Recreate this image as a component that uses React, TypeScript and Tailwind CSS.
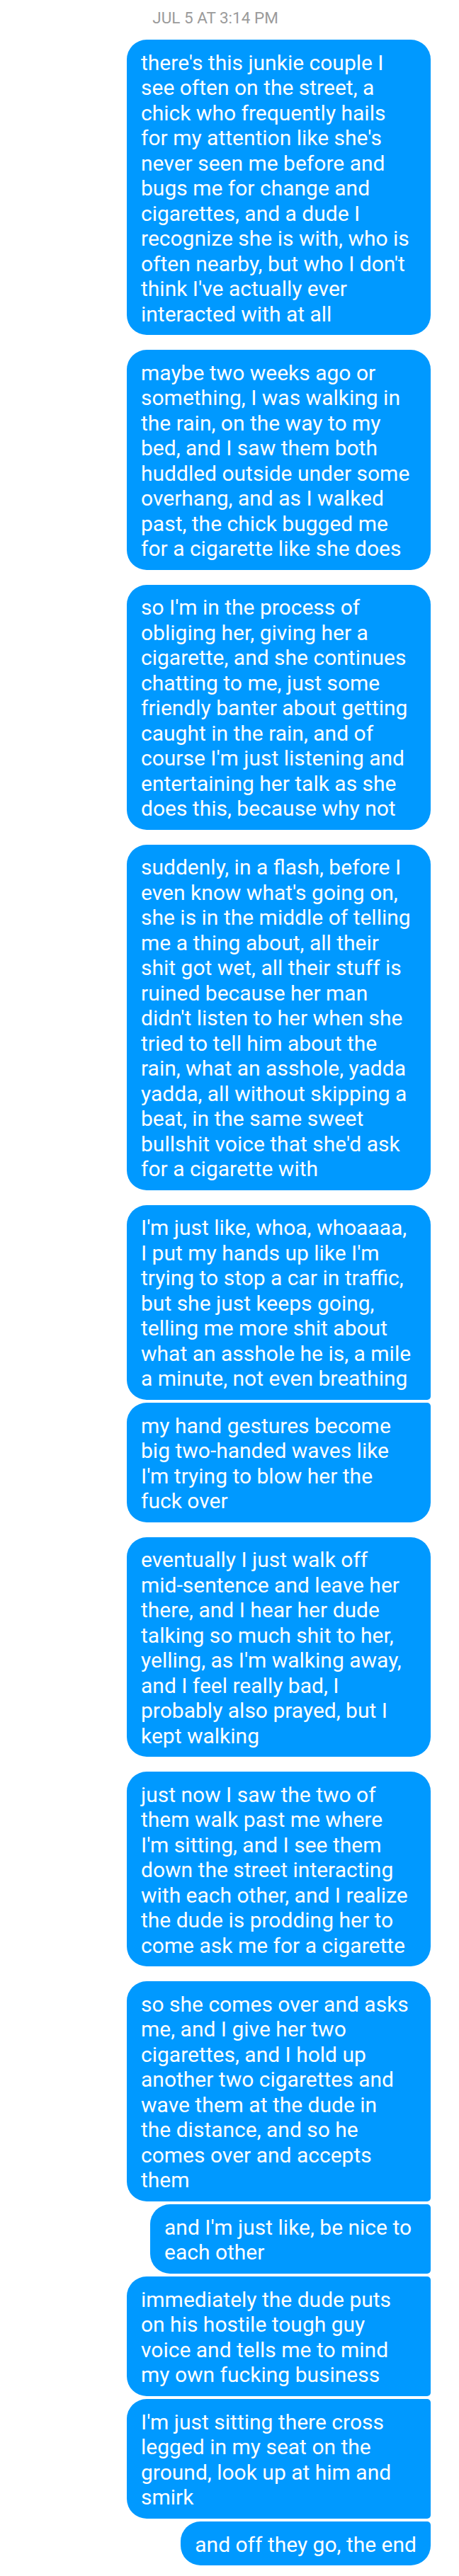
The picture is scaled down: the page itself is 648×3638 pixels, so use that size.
const messages: { lines: string[]; pos: "single" | "first" | "middle" | "last"; width?: string }[] = [
  {
    pos: "single",
    lines: [
      "there's this junkie couple I",
      "see often on the street, a",
      "chick who frequently hails",
      "for my attention like she's",
      "never seen me before and",
      "bugs me for change and",
      "cigarettes, and a dude I",
      "recognize she is with, who is",
      "often nearby, but who I don't",
      "think I've actually ever",
      "interacted with at all",
    ],
  },
  {
    pos: "single",
    lines: [
      "maybe two weeks ago or",
      "something, I was walking in",
      "the rain, on the way to my",
      "bed, and I saw them both",
      "huddled outside under some",
      "overhang, and as I walked",
      "past, the chick bugged me",
      "for a cigarette like she does",
    ],
  },
  {
    pos: "single",
    lines: [
      "so I'm in the process of",
      "obliging her, giving her a",
      "cigarette, and she continues",
      "chatting to me, just some",
      "friendly banter about getting",
      "caught in the rain, and of",
      "course I'm just listening and",
      "entertaining her talk as she",
      "does this, because why not",
    ],
  },
  {
    pos: "single",
    lines: [
      "suddenly, in a flash, before I",
      "even know what's going on,",
      "she is in the middle of telling",
      "me a thing about, all their",
      "shit got wet, all their stuff is",
      "ruined because her man",
      "didn't listen to her when she",
      "tried to tell him about the",
      "rain, what an asshole, yadda",
      "yadda, all without skipping a",
      "beat, in the same sweet",
      "bullshit voice that she'd ask",
      "for a cigarette with",
    ],
  },
  {
    pos: "first",
    lines: [
      "I'm just like, whoa, whoaaaa,",
      "I put my hands up like I'm",
      "trying to stop a car in traffic,",
      "but she just keeps going,",
      "telling me more shit about",
      "what an asshole he is, a mile",
      "a minute, not even breathing",
    ],
  },
  {
    pos: "last",
    lines: ["my hand gestures become", "big two-handed waves like", "I'm trying to blow her the", "fuck over"],
  },
  {
    pos: "single",
    lines: [
      "eventually I just walk off",
      "mid-sentence and leave her",
      "there, and I hear her dude",
      "talking so much shit to her,",
      "yelling, as I'm walking away,",
      "and I feel really bad, I",
      "probably also prayed, but I",
      "kept walking",
    ],
  },
  {
    pos: "single",
    lines: [
      "just now I saw the two of",
      "them walk past me where",
      "I'm sitting, and I see them",
      "down the street interacting",
      "with each other, and I realize",
      "the dude is prodding her to",
      "come ask me for a cigarette",
    ],
  },
  {
    pos: "first",
    lines: [
      "so she comes over and asks",
      "me, and I give her two",
      "cigarettes, and I hold up",
      "another two cigarettes and",
      "wave them at the dude in",
      "the distance, and so he",
      "comes over and accepts",
      "them",
    ],
  },
  { pos: "middle", width: "w-[396px]", lines: ["and I'm just like, be nice to", "each other"] },
  {
    pos: "middle",
    lines: ["immediately the dude puts", "on his hostile tough guy", "voice and tells me to mind", "my own fucking business"],
  },
  {
    pos: "middle",
    lines: ["I'm just sitting there cross", "legged in my seat on the", "ground, look up at him and", "smirk"],
  },
  { pos: "last", width: "w-fit", lines: ["and off they go, the end"] },
];

const corners = {
  single: "rounded-tl-[28px] rounded-bl-[28px] rounded-tr-[28px] rounded-br-[28px]",
  first: "rounded-tl-[28px] rounded-bl-[28px] rounded-tr-[28px] rounded-br-[5px]",
  middle: "rounded-tl-[28px] rounded-bl-[28px] rounded-tr-[5px] rounded-br-[5px]",
  last: "rounded-tl-[28px] rounded-bl-[28px] rounded-tr-[5px] rounded-br-[28px]",
};

export default function App() {
  return (
    <div className="min-h-[3638px] w-[648px] bg-white pr-[40px] font-['Roboto',sans-serif]">
      <div className="pt-[14px] text-center text-[22.5px] leading-[22.5px] text-[#9b9b9b]">JUL 5 AT 3:14 PM</div>

      <div className="mt-[19.5px] flex flex-col items-end">
        {messages.map((m, i) => {
          const grouped = m.pos === "middle" || m.pos === "last";
          return (
            <div
              key={i}
              className={`${m.width ?? "w-[429px]"} ${corners[m.pos]} ${
                i === 0 ? "" : grouped ? "mt-[4.5px]" : "mt-[21px]"
              } bg-[#0099ff] pl-[20px] pr-[20px] pt-[14.5px] pb-[12px] text-[30px] leading-[35.5px] text-white`}
            >
              {m.lines.map((line, j) => (
                <div key={j} className="whitespace-nowrap">
                  {line}
                </div>
              ))}
            </div>
          );
        })}
      </div>
    </div>
  );
}
